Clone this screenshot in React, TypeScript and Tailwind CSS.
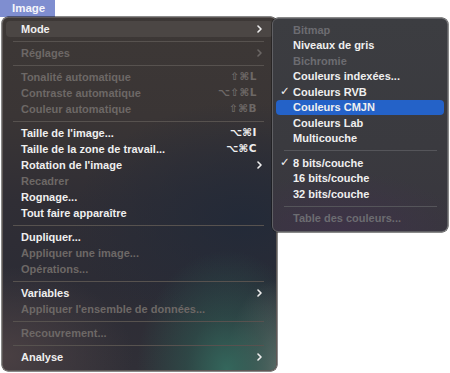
import React from "react";

type Item =
  | { sep: true }
  | {
      sep?: false;
      label: string;
      disabled?: boolean;
      shortcut?: string;
      chevron?: boolean;
      highlight?: boolean;
      check?: boolean;
    };

const mainItems: Item[] = [
  { label: "Mode", chevron: true, highlight: true },
  { sep: true },
  { label: "Réglages", disabled: true, chevron: true },
  { sep: true },
  { label: "Tonalité automatique", disabled: true, shortcut: "⇧⌘L" },
  { label: "Contraste automatique", disabled: true, shortcut: "⌥⇧⌘L" },
  { label: "Couleur automatique", disabled: true, shortcut: "⇧⌘B" },
  { sep: true },
  { label: "Taille de l'image...", shortcut: "⌥⌘I" },
  { label: "Taille de la zone de travail...", shortcut: "⌥⌘C" },
  { label: "Rotation de l'image", chevron: true },
  { label: "Recadrer", disabled: true },
  { label: "Rognage..." },
  { label: "Tout faire apparaître" },
  { sep: true },
  { label: "Dupliquer..." },
  { label: "Appliquer une image...", disabled: true },
  { label: "Opérations...", disabled: true },
  { sep: true },
  { label: "Variables", chevron: true },
  { label: "Appliquer l'ensemble de données...", disabled: true },
  { sep: true },
  { label: "Recouvrement...", disabled: true },
  { sep: true },
  { label: "Analyse", chevron: true },
];

const subItems: Item[] = [
  { label: "Bitmap", disabled: true },
  { label: "Niveaux de gris" },
  { label: "Bichromie", disabled: true },
  { label: "Couleurs indexées..." },
  { label: "Couleurs RVB", check: true },
  { label: "Couleurs CMJN", highlight: true },
  { label: "Couleurs Lab" },
  { label: "Multicouche" },
  { sep: true },
  { label: "8 bits/couche", check: true },
  { label: "16 bits/couche" },
  { label: "32 bits/couche" },
  { sep: true },
  { label: "Table des couleurs...", disabled: true },
];

function Chevron({ dim }: { dim?: boolean }) {
  return (
    <svg width="5" height="8" viewBox="0 0 5 8" className="shrink-0">
      <polyline
        points="1,1 4,4 1,7"
        fill="none"
        stroke={dim ? "#6a6664" : "#eeeeee"}
        strokeWidth="1.6"
        strokeLinecap="round"
        strokeLinejoin="round"
      />
    </svg>
  );
}

export default function App() {
  return (
    <div className="relative w-[450px] h-[373px] bg-white overflow-hidden font-['Liberation_Sans','DejaVu_Sans',sans-serif] font-bold text-[11px]">
      <div className="w-[55px] h-[17px] bg-[#7f8ed0] text-[#f4f5fb] text-[11.5px] leading-[17px] pl-[12px]">
        Image
      </div>

      {/* main menu */}
      <div className="ml-[2px] w-[275px] h-[354px] rounded-[6px] border border-[#5e5856] shadow-[0_0_0_0.5px_#151515] pt-[3px] overflow-hidden [background:radial-gradient(90px_120px_at_82%_100%,rgba(52,106,94,0.95)_0%,rgba(45,90,82,0.55)_45%,transparent_100%),radial-gradient(50px_90px_at_100%_100%,#767573_0%,rgba(110,110,108,0.55)_45%,transparent_100%),radial-gradient(130px_90px_at_0%_96%,#4a4043_0%,transparent_100%),radial-gradient(170px_120px_at_88%_58%,#232a38_0%,transparent_100%),linear-gradient(to_bottom,#3d3836_0%,#3a3535_28%,#302e35_52%,#2c2c35_75%,#302f37_100%)]">
        {mainItems.map((it, i) =>
          it.sep ? (
            <div key={i} className="h-[8px] flex items-center ml-[10px] mr-[12px]">
              <div className="h-px w-full bg-[#57524f]" />
            </div>
          ) : (
            <div
              key={i}
              className={`mx-[3px] h-[16px] flex items-center pl-[15px] pr-[11px] rounded-[4px] ${
                it.highlight ? "bg-[#4b4644]" : ""
              }`}
            >
              <span
                className={`flex-1 whitespace-nowrap ${
                  it.disabled ? "text-[#6d6866]" : "text-[#efefef]"
                }`}
              >
                {it.label}
              </span>
              {it.shortcut && (
                <span
                  className={`mr-[5px] tracking-[0.5px] font-bold font-['DejaVu_Sans',sans-serif] text-[10.5px] ${
                    it.disabled ? "text-[#6d6866]" : "text-[#efefef]"
                  }`}
                >
                  {it.shortcut}
                </span>
              )}
              {it.chevron && <Chevron dim={it.disabled} />}
            </div>
          )
        )}
      </div>

      {/* submenu */}
      <div className="absolute left-[272px] top-[18px] w-[176px] h-[214px] rounded-[6px] border border-[#606064] shadow-[0_0_0_0.5px_#151515] pt-[3px] [background:radial-gradient(120px_60px_at_40%_100%,#3e3348_0%,transparent_100%),linear-gradient(to_bottom,#3c3d41_0%,#3a3a3f_60%,#38363e_100%)]">
        {subItems.map((it, i) =>
          it.sep ? (
            <div key={i} className="h-[9px] flex items-center ml-[11px] mr-[10px]">
              <div className="h-px w-full bg-[#55555a]" />
            </div>
          ) : (
            <div
              key={i}
              className={`mx-[3px] h-[15.5px] flex items-center pl-[4px] rounded-[4px] ${
                it.highlight ? "bg-[#2462c8]" : ""
              }`}
            >
              <span className="w-[13px] text-[#efefef] font-bold font-['DejaVu_Sans',sans-serif] text-[11.5px]">
                {it.check ? "✓" : ""}
              </span>
              <span
                className={`whitespace-nowrap ${
                  it.disabled ? "text-[#6c6c71]" : "text-[#efefef]"
                }`}
              >
                {it.label}
              </span>
            </div>
          )
        )}
      </div>
    </div>
  );
}
